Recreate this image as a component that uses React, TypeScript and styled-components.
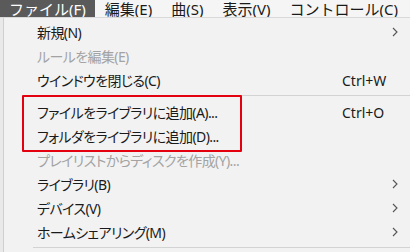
import React from "react";
import styled, { createGlobalStyle } from "styled-components";

const GlobalStyle = createGlobalStyle`
  html, body {
    margin: 0;
    padding: 0;
    background: #e9e9e9;
    overflow: hidden;
  }
  body {
    font-family: "Noto Sans", "Noto Sans CJK JP", sans-serif;
  }
`;

type Entry =
  | { kind: "item"; label: string; shortcut?: string; disabled?: boolean; submenu?: boolean }
  | { kind: "separator" };

const topMenus = ["ファイル(F)", "編集(E)", "曲(S)", "表示(V)", "コントロール(C)"];

const entries: Entry[] = [
  { kind: "item", label: "新規(N)", submenu: true },
  { kind: "item", label: "ルールを編集(E)", disabled: true },
  { kind: "item", label: "ウインドウを閉じる(C)", shortcut: "Ctrl+W" },
  { kind: "separator" },
  { kind: "item", label: "ファイルをライブラリに追加(A)...", shortcut: "Ctrl+O" },
  { kind: "item", label: "フォルダをライブラリに追加(D)..." },
  { kind: "item", label: "プレイリストからディスクを作成(Y)...", disabled: true },
  { kind: "item", label: "ライブラリ(B)", submenu: true },
  { kind: "item", label: "デバイス(V)", submenu: true },
  { kind: "item", label: "ホームシェアリング(M)", submenu: true },
  { kind: "separator" },
];

const Chevron = () => (
  <svg width="6" height="10" viewBox="0 0 6 10">
    <path d="M1 1 L5 5 L1 9" fill="none" stroke="#555" strokeWidth="1.1" />
  </svg>
);

export default function App() {
  return (
    <Screen>
      <GlobalStyle />
      <MenuBar>
        {topMenus.map((m, i) => (
          <TopItem key={m} $active={i === 0}>
            {m}
          </TopItem>
        ))}
      </MenuBar>
      <Dropdown>
        {entries.map((e, i) =>
          e.kind === "separator" ? (
            <Separator key={i} />
          ) : (
            <Row key={i} $disabled={e.disabled}>
              <Label>{e.label}</Label>
              <Shortcut>{e.shortcut}</Shortcut>
              <Arrow>{e.submenu && <Chevron />}</Arrow>
            </Row>
          )
        )}
        <Highlight />
      </Dropdown>
    </Screen>
  );
}

const Screen = styled.div`
  width: 410px;
  height: 252px;
  overflow: hidden;
  display: flex;
  flex-direction: column;
`;

const MenuBar = styled.div`
  height: 22px;
  display: flex;
  align-items: stretch;
  background: #f5f5f5;
  border-bottom: 1px solid #d9d9d9;
  font-size: 15px;
  color: #1a1a1a;
  white-space: nowrap;
  overflow: hidden;
`;

const TopItem = styled.div<{ $active?: boolean }>`
  display: flex;
  align-items: center;
  padding: 0 9px;
  margin-right: 1px;
  background: ${(p) => (p.$active ? "#5a5a5a" : "transparent")};
  color: ${(p) => (p.$active ? "#ffffff" : "#1a1a1a")};
`;

const Dropdown = styled.div`
  position: relative;
  flex: 1;
  margin-left: 3px;
  border-left: 1px solid #cfcfcf;
  background: #f2f2f2;
  padding-top: 2px;
  font-size: 14px;
`;

const Row = styled.div<{ $disabled?: boolean }>`
  height: 24px;
  display: grid;
  grid-template-columns: 1fr 50px 18px;
  align-items: center;
  padding-left: 33px;
  color: ${(p) => (p.$disabled ? "#a3a3a3" : "#1a1a1a")};
  white-space: nowrap;
`;

const Label = styled.span`
  font-feature-settings: "palt";
  letter-spacing: -0.6px;
`;

const Shortcut = styled.span`
  color: #1a1a1a;
`;

const Arrow = styled.span`
  display: flex;
  align-items: center;
`;

const Separator = styled.div`
  height: 8px;
  margin-left: 29px;
  position: relative;
  &::after {
    content: "";
    position: absolute;
    left: 0;
    right: 0;
    top: 3px;
    border-top: 1px solid #d3d3d3;
  }
`;

const Highlight = styled.div`
  position: absolute;
  left: 18px;
  top: 77px;
  width: 220px;
  height: 57px;
  box-sizing: border-box;
  border: 2px solid #e3000f;
  border-radius: 1px;
  pointer-events: none;
`;
